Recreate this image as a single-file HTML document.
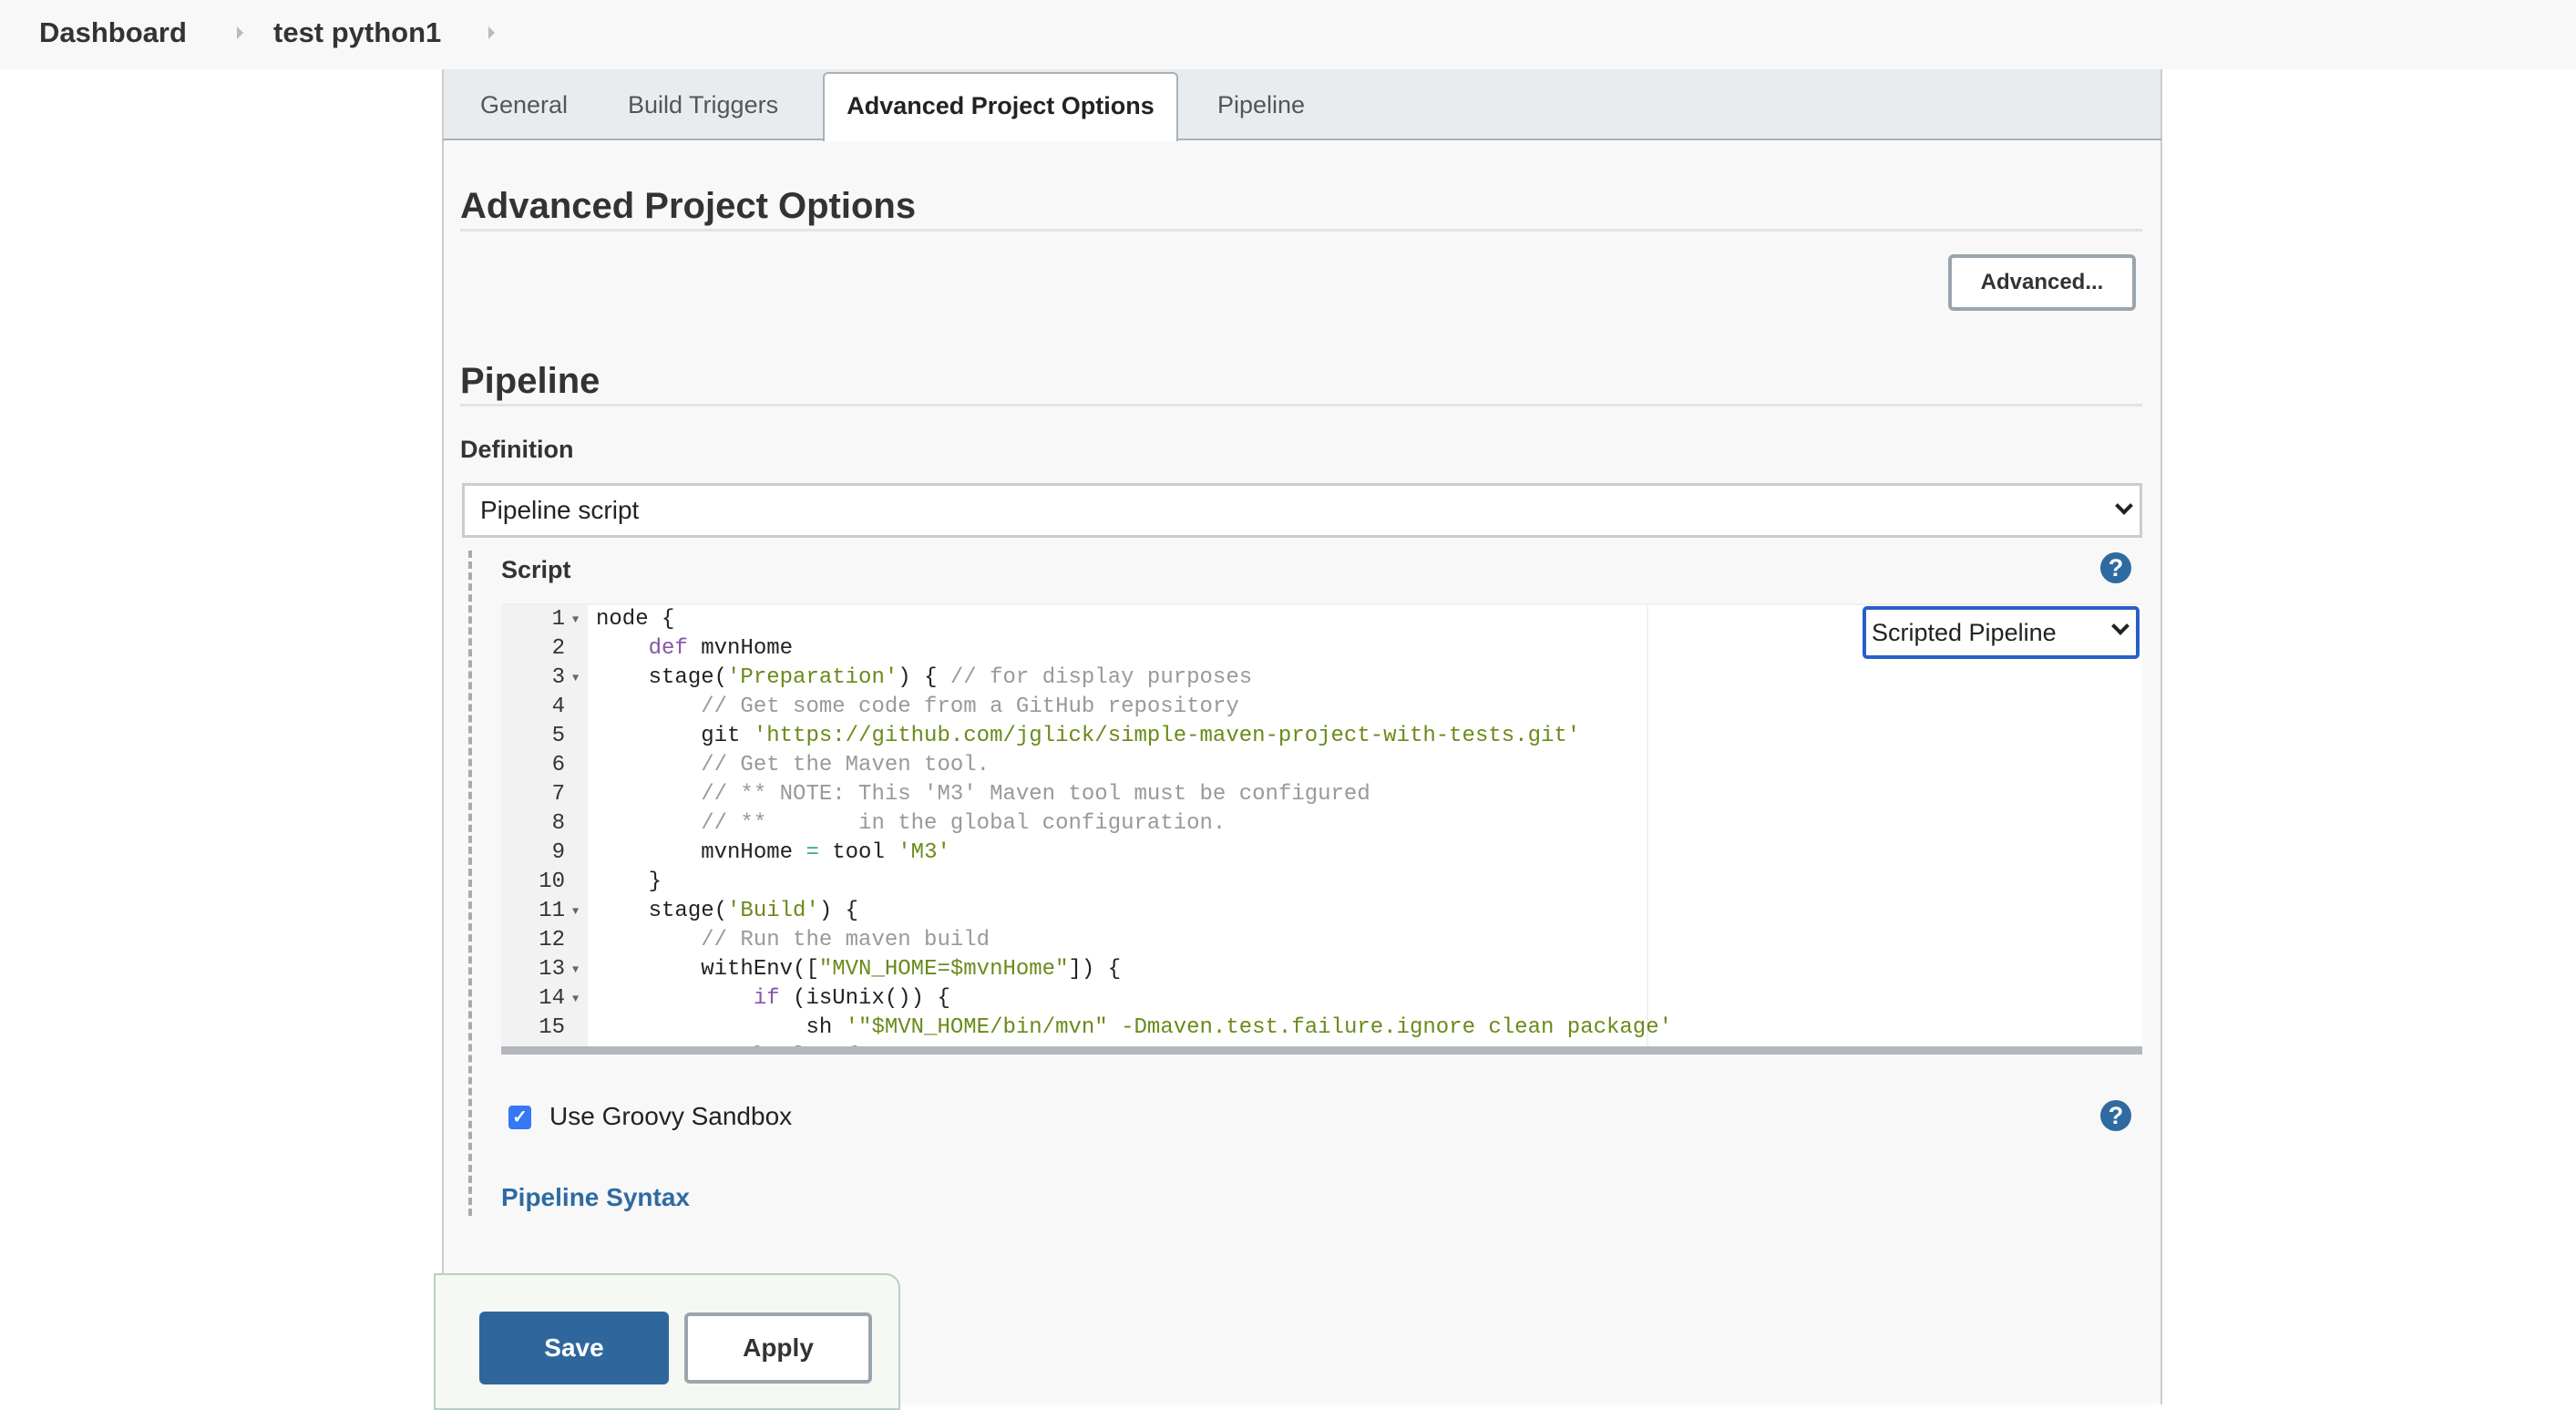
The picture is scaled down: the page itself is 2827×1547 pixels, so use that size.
<!DOCTYPE html>
<html><head><meta charset="utf-8"><style>
*{box-sizing:border-box;margin:0;padding:0}
body{width:2827px;height:1541px;overflow:hidden;background:#fff;font-family:"Liberation Sans",sans-serif;color:#333;position:relative}
.abs{position:absolute}
.top{left:0;top:0;width:2827px;height:76px;background:#f8f8f8}
.bc{top:16px;font-size:31px;font-weight:bold;color:#333;line-height:40px}
.arr{width:0;height:0;border-left:7px solid #bbb;border-top:7px solid transparent;border-bottom:7px solid transparent;top:29px}
.panel{left:485px;top:76px;width:1888px;height:1465px;background:#f8f8f8;border-left:2px solid #ccc;border-right:2px solid #ccc}
.tabs{left:485px;top:76px;width:1888px;height:78px;background:#e9ecef;border-bottom:2px solid #aab0b6;border-left:2px solid #ccc;border-right:2px solid #ccc}
.tab{top:95px;font-size:27px;color:#555;line-height:40px}
.atab{left:903px;top:79px;width:390px;height:76px;background:#fff;border:2px solid #aab0b6;border-bottom:none;border-radius:6px 6px 0 0;font-size:27px;font-weight:bold;color:#222;text-align:center;line-height:70px}
h2{position:absolute;font-size:40px;font-weight:bold;color:#333}
.hr{height:3px;background:#e3e3e3;left:505px;width:1846px}
.btn{border:4px solid #9aa5ad;border-radius:6px;background:#fff;font-weight:bold;color:#333;text-align:center}
.sel{background:#fff;border:3px solid #ccc;font-size:28px;color:#222;padding-left:17px}
.chev{position:absolute;width:14px;height:14px;border-right:4px solid #222;border-bottom:4px solid #222;transform:rotate(45deg)}
.help{width:34px;height:34px;border-radius:50%;background:#2f6aa0;color:#fff;font-weight:bold;font-size:27px;text-align:center;line-height:34px}
.ed{left:550px;top:662px;width:1801px;height:495px;background:#fff;overflow:hidden;border-top:2px solid #eef0f2}
.gut{left:0;top:0;width:95px;height:495px;background:#f2f2f2}
pre{position:absolute;font-family:"Liberation Mono",monospace;font-size:24px;line-height:32px;color:#222}
.ln{left:0;top:0;width:70px;text-align:right;color:#333}
.fold{left:78px;font-size:12px;color:#666}
.c{color:#999}.s{color:#6a8a1a}.k{color:#8855aa}.o{color:#3a9}
</style></head><body>
<div class="abs top"></div>
<div class="abs bc" style="left:43px">Dashboard</div>
<div class="abs arr" style="left:260px"></div>
<div class="abs bc" style="left:300px">test python1</div>
<div class="abs arr" style="left:536px"></div>

<div class="abs panel"></div>
<div class="abs tabs"></div>
<div class="abs tab" style="left:527px">General</div>
<div class="abs tab" style="left:689px">Build Triggers</div>
<div class="abs atab">Advanced Project Options</div>
<div class="abs tab" style="left:1336px">Pipeline</div>

<h2 style="left:505px;top:204px">Advanced Project Options</h2>
<div class="abs hr" style="top:251px"></div>
<div class="abs btn" style="left:2138px;top:279px;width:206px;height:62px;font-size:24px;line-height:54px">Advanced...</div>

<h2 style="left:505px;top:396px">Pipeline</h2>
<div class="abs hr" style="top:443px"></div>
<div class="abs" style="left:505px;top:478px;font-size:27px;font-weight:bold;color:#333">Definition</div>
<div class="abs sel" style="left:507px;top:530px;width:1844px;height:60px;line-height:54px">Pipeline script</div>
<div class="chev" style="left:2324px;top:548px"></div>

<div class="abs" style="left:514px;top:604px;height:730px;border-left:4px dashed #aaa"></div>
<div class="abs" style="left:550px;top:610px;font-size:27px;font-weight:bold;color:#333">Script</div>
<div class="abs help" style="left:2305px;top:606px">?</div>

<div class="abs ed">
<div class="abs gut"></div>
<pre class="ln" style="top:0">1
2
3
4
5
6
7
8
9
10
11
12
13
14
15
16</pre>
<pre class="fold" style="top:0">▼</pre>
<pre class="fold" style="top:64px">▼</pre>
<pre class="fold" style="top:320px">▼</pre>
<pre class="fold" style="top:384px">▼</pre>
<pre class="fold" style="top:416px">▼</pre>
<div class="abs" style="left:1257px;top:0;width:2px;height:495px;background:#f0f0f0"></div>
<pre style="left:104px;top:0">node {
    <span class="k">def</span> mvnHome
    stage(<span class="s">'Preparation'</span>) { <span class="c">// for display purposes</span>
        <span class="c">// Get some code from a GitHub repository</span>
        git <span class="s">'https://github.com/jglick/simple-maven-project-with-tests.git'</span>
        <span class="c">// Get the Maven tool.</span>
        <span class="c">// ** NOTE: This 'M3' Maven tool must be configured</span>
        <span class="c">// **       in the global configuration.</span>
        mvnHome <span class="o">=</span> tool <span class="s">'M3'</span>
    }
    stage(<span class="s">'Build'</span>) {
        <span class="c">// Run the maven build</span>
        withEnv([<span class="s">"MVN_HOME=$mvnHome"</span>]) {
            <span class="k">if</span> (isUnix()) {
                sh <span class="s">'"$MVN_HOME/bin/mvn" -Dmaven.test.failure.ignore clean package'</span>
            } else {</pre>
<div class="abs" style="left:0;top:484px;width:1801px;height:11px;background:#b4b8bd"></div>
</div>
<div class="abs sel" style="left:2044px;top:665px;width:304px;height:58px;border:4px solid #2a5fc8;border-radius:5px;line-height:50px;padding-left:6px;font-size:27px">Scripted Pipeline</div>
<div class="chev" style="left:2320px;top:680px"></div>

<div class="abs" style="left:558px;top:1213px;width:25px;height:26px;background:#3478f6;border-radius:4px;color:#fff;font-size:20px;text-align:center;line-height:26px;font-weight:bold">✓</div>
<div class="abs" style="left:603px;top:1209px;font-size:28px;color:#222">Use Groovy Sandbox</div>
<div class="abs help" style="left:2305px;top:1207px">?</div>
<div class="abs" style="left:550px;top:1298px;font-size:28px;font-weight:bold;color:#2e6aa3">Pipeline Syntax</div>

<div class="abs" style="left:476px;top:1397px;width:512px;height:150px;background:#f5f8f3;border:2px solid #b8d0c0;border-radius:0 16px 0 0"></div>
<div class="abs" style="left:526px;top:1439px;width:208px;height:80px;background:#2f679c;border-radius:6px;color:#fff;font-weight:bold;font-size:28px;text-align:center;line-height:80px">Save</div>
<div class="abs btn" style="left:751px;top:1440px;width:206px;height:78px;font-size:28px;line-height:70px">Apply</div>
</body></html>
